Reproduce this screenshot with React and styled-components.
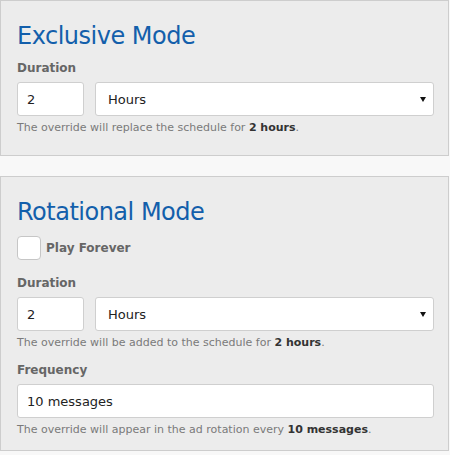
import React from "react";
import styled, { createGlobalStyle } from "styled-components";

const Global = createGlobalStyle`
  html, body { margin: 0; padding: 0; background: #f8f8f8; }
  body { font-family: "DejaVu Sans", sans-serif; }
  * { box-sizing: border-box; }
`;

const Page = styled.div`
  width: 450px;
  display: flex;
  flex-direction: column;
  gap: 20px;
`;

const Panel = styled.section`
  width: 449px;
  background: #ececec;
  border: 1px solid #cdcdcd;
  padding: 21px 14px ${(p) => p.$pb || "19px"} 16px;
`;

const Title = styled.h2`
  margin: 0 0 10px 0;
  font-family: "DejaVu Sans", sans-serif;
  font-weight: normal;
  font-size: 24px;
  line-height: 28px;
  color: #135fab;
  letter-spacing: -0.5px;
`;

const Label = styled.div`
  font-family: "DejaVu Sans", sans-serif;
  font-weight: bold;
  font-size: 12px;
  line-height: 16px;
  color: #666;
  margin-bottom: 6px;
`;

const Row = styled.div`
  display: flex;
  gap: 11px;
`;

const Input = styled.div`
  height: 34px;
  width: ${(p) => p.$w || "auto"};
  flex: ${(p) => (p.$grow ? 1 : "none")};
  background: #fff;
  border: 1px solid #cfcfcf;
  border-radius: 3px;
  display: flex;
  align-items: center;
  padding: 0 9px;
  font-family: "DejaVu Sans", sans-serif;
  font-size: 13px;
  color: #222;
`;

const SelectBox = styled(Input)`
  padding: 0 7px 0 12px;
  justify-content: space-between;
`;

const Arrow = styled.span`
  width: 0;
  height: 0;
  border-left: 3px solid transparent;
  border-right: 3px solid transparent;
  border-top: 5px solid #111;
`;

const Help = styled.div`
  margin-top: 4px;
  font-family: "DejaVu Sans", sans-serif;
  font-size: 11px;
  line-height: 16px;
  color: #7a7a7a;
  b { color: #333; font-weight: bold; }
`;

const Field = styled.div`
  margin-top: ${(p) => p.$mt || "0"};
`;

const CheckRow = styled.label`
  display: flex;
  align-items: center;
  gap: 5px;
  margin: 3px 0 15px 0;
`;

const Box = styled.span`
  width: 24px;
  height: 24px;
  background: #fff;
  border: 1px solid #c6c6c6;
  border-radius: 4px;
`;

const CheckText = styled.span`
  font-family: "DejaVu Sans", sans-serif;
  font-weight: bold;
  font-size: 12px;
  color: #666;
`;

function Duration({ text }) {
  return (
    <Field>
      <Label>Duration</Label>
      <Row>
        <Input $w="67px">2</Input>
        <SelectBox $grow>
          Hours
          <Arrow />
        </SelectBox>
      </Row>
      <Help>
        {text} <b>2 hours</b>.
      </Help>
    </Field>
  );
}

export default function App() {
  return (
    <>
      <Global />
      <Page>
        <Panel>
          <Title>Exclusive Mode</Title>
          <Duration text="The override will replace the schedule for" />
        </Panel>
        <Panel $pb="12px">
          <Title>Rotational Mode</Title>
          <CheckRow>
            <Box />
            <CheckText>Play Forever</CheckText>
          </CheckRow>
          <Duration text="The override will be added to the schedule for" />
          <Field $mt="11px">
            <Label>Frequency</Label>
            <Input>10 messages</Input>
            <Help>
              The override will appear in the ad rotation every <b>10 messages</b>.
            </Help>
          </Field>
        </Panel>
      </Page>
    </>
  );
}
